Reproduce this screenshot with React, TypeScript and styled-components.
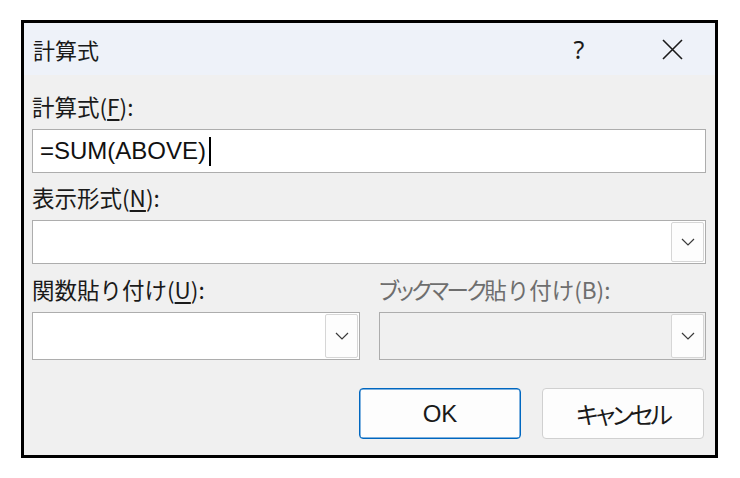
import React from "react";
import styled, { createGlobalStyle } from "styled-components";

const Global = createGlobalStyle`
  html, body { margin: 0; padding: 0; background: #ffffff; }
  body { font-family: "Noto Sans", "Noto Sans CJK JP", sans-serif; }
`;

const Page = styled.div`
  padding: 20px 0 0 21px;
`;

const Frame = styled.div`
  width: 697px;
  height: 438px;
  box-sizing: border-box;
  border: 3px solid #000;
  background: #f0f0f0;
  display: flex;
  flex-direction: column;
  overflow: hidden;
`;

const TitleBar = styled.div`
  height: 52px;
  flex: none;
  background: #eef2f9;
  display: flex;
  align-items: center;
  padding: 0 32px 0 9px;
`;

const TitleText = styled.div`
  font-family: "Noto Sans CJK JP", sans-serif;
  font-size: 22px;
  color: #1a1a1a;
  flex: 1;
`;

const HelpGlyph = styled.div`
  width: 12px;
  text-align: center;
  font-family: "Noto Sans", sans-serif;
  font-size: 25px;
  line-height: 30px;
  color: #1a1a1a;
  margin-right: 77px;
`;

const CloseIcon = styled.svg`
  width: 21px;
  height: 21px;
  display: block;
`;

const Body = styled.div`
  flex: 1;
  display: flex;
  flex-direction: column;
  padding: 15px 9px 0 8px;
`;

const Label = styled.div<{ $disabled?: boolean; $top?: number }>`
  height: 32px;
  line-height: 32px;
  margin-top: ${(p) => p.$top ?? 0}px;
  margin-bottom: 7px;
  font-family: "Noto Sans CJK JP", sans-serif;
  font-size: 22.5px;
  color: ${(p) => (p.$disabled ? "#6e6e6e" : "#1a1a1a")};
  white-space: nowrap;
  u { text-underline-offset: 3px; }
`;

const Kana = styled.span<{ $track?: number }>`
  font-feature-settings: "palt";
  letter-spacing: ${(p) => p.$track ?? -2}px;
`;

const TextBox = styled.div<{ $h?: number; $disabled?: boolean }>`
  position: relative;
  height: ${(p) => p.$h ?? 44}px;
  box-sizing: border-box;
  border: 1px solid #adadad;
  background: ${(p) => (p.$disabled ? "#f0f0f0" : "#ffffff")};
  display: flex;
  align-items: center;
  padding-left: 7px;
`;

const Formula = styled.span`
  font-family: "Liberation Sans", Arial, sans-serif;
  font-size: 24px;
  color: #111;
`;

const Caret = styled.span`
  display: inline-block;
  width: 1.5px;
  height: 29px;
  background: #000;
  margin-left: 3px;
`;

const DropBtn = styled.div`
  margin-left: auto;
  margin-right: 1px;
  align-self: stretch;
  margin-top: 1px;
  margin-bottom: 1px;
  width: 33px;
  box-sizing: border-box;
  border: 1px solid #d6d6d6;
  border-radius: 2px;
  background: #fdfdfd;
  display: flex;
  align-items: center;
  justify-content: center;
`;

const Row = styled.div`
  display: grid;
  grid-template-columns: 328px 327px;
  column-gap: 19px;
`;

const Col = styled.div`
  display: flex;
  flex-direction: column;
`;

const Buttons = styled.div`
  margin-top: 28px;
  display: flex;
  justify-content: flex-end;
  gap: 21px;
  padding-right: 2px;
`;

const Btn = styled.button<{ $primary?: boolean }>`
  width: 162px;
  height: 51px;
  box-sizing: border-box;
  border-radius: 4px;
  border: 1px solid ${(p) => (p.$primary ? "#0067c0" : "#d0d0d0")};
  box-shadow: ${(p) => (p.$primary ? "inset 0 0 0 0.5px #0067c0" : "none")};
  background: #fdfdfd;
  font-family: "Liberation Sans", "Noto Sans CJK JP", sans-serif;
  font-size: 24px;
  color: #1a1a1a;
  padding: 0;
`;

const Chevron = () => (
  <svg width="14" height="8" viewBox="0 0 14 8">
    <path d="M1 1 L7 7 L13 1" fill="none" stroke="#3a3a3a" strokeWidth="1.2" />
  </svg>
);

export default function App() {
  return (
    <>
      <Global />
      <Page>
        <Frame>
          <TitleBar>
            <TitleText>計算式</TitleText>
            <HelpGlyph>?</HelpGlyph>
            <CloseIcon viewBox="0 0 21 21">
              <path d="M1 1 L20 20 M20 1 L1 20" stroke="#1a1a1a" strokeWidth="1.6" fill="none" />
            </CloseIcon>
          </TitleBar>
          <Body>
            <Label>
              計算式(<u>F</u>):
            </Label>
            <TextBox>
              <Formula>=SUM(ABOVE)</Formula>
              <Caret />
            </TextBox>
            <Label $top={8}>
              表示形式(<u>N</u>):
            </Label>
            <TextBox>
              <DropBtn>
                <Chevron />
              </DropBtn>
            </TextBox>
            <Row>
              <Col>
                <Label $top={9}>
                  関数貼り付け(<u>U</u>):
                </Label>
                <TextBox $h={48}>
                  <DropBtn>
                    <Chevron />
                  </DropBtn>
                </TextBox>
              </Col>
              <Col>
                <Label $top={9} $disabled>
                  <Kana $track={-2.5}>ブックマーク</Kana>貼り付け(B):
                </Label>
                <TextBox $h={48} $disabled>
                  <DropBtn>
                    <Chevron />
                  </DropBtn>
                </TextBox>
              </Col>
            </Row>
            <Buttons>
              <Btn $primary>OK</Btn>
              <Btn>
                <Kana $track={-3}>キャンセル</Kana>
              </Btn>
            </Buttons>
          </Body>
        </Frame>
      </Page>
    </>
  );
}
